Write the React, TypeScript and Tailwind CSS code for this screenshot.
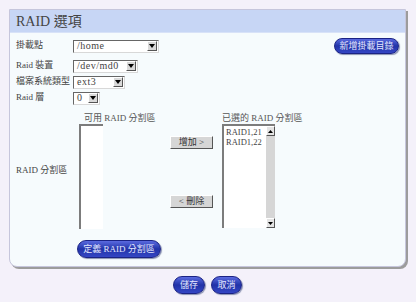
import React from "react";

const serif = "font-['Liberation_Serif','Noto_Sans_CJK_TC',serif]";

function Sel({ value, cls }: { value: string; cls: string }) {
  return (
    <div
      className={`flex items-center h-[13px] bg-white border border-t-[#666] border-l-[#666] border-b-[#d8d8d8] border-r-[#d8d8d8] ${cls}`}
    >
      <span className="flex-1 pl-[3px] text-[10px] leading-none text-[#444] tracking-[0.5px] whitespace-nowrap">{value}</span>
      <div className="w-[10px] h-[10px] mr-[1px] bg-[#d9d9d9] border border-t-white border-l-white border-b-[#555] border-r-[#555] flex items-center justify-center">
        <svg width="6" height="4" viewBox="0 0 6 4">
          <path d="M0 0 L6 0 L3 4 Z" fill="#000" />
        </svg>
      </div>
    </div>
  );
}

function BlueBtn({ children, cls }: { children: React.ReactNode; cls: string }) {
  return (
    <div
      className={`flex items-center justify-center whitespace-nowrap rounded-full border border-[#1b2384] bg-gradient-to-b from-[#5b6ae0] via-[#2233a8] to-[#3446c4] text-[#e4e8ff] text-[9px] leading-none shadow-[1px_1px_1px_#8890b0] ${cls}`}
    >
      {children}
    </div>
  );
}

function GrayBtn({ children }: { children: React.ReactNode }) {
  return (
    <div className="flex items-center justify-center whitespace-nowrap w-[43px] h-[13px] bg-[#d6d6d6] border border-t-white border-l-white border-b-[#555] border-r-[#555] text-[9px] leading-none text-[#333]">
      {children}
    </div>
  );
}

export default function App() {
  return (
    <div className={`w-[416px] h-[302px] bg-[#f4f1fa] pt-[9px] pl-[9px] ${serif}`}>
      <div className="w-[397px] h-[258px] bg-[#f6fbfd] border border-[#c6c6dc] rounded-b-[8px] shadow-[2px_2px_0_#9c9c9c] flex flex-col">
        <div className="h-[23px] bg-[#c7d6f5] flex items-center pl-[6px] text-[14px] text-[#444] border-b border-[#d8e2f8]">
          RAID 選項
        </div>
        <div className="flex flex-col pl-[6px] pr-[6px] pt-[5px] text-[9px] text-[#444] whitespace-nowrap">
          <div className="flex items-center h-[16px]">
            <span className="w-[57px]">掛載點</span>
            <Sel value="/home" cls="w-[86px]" />
            <div className="flex-1" />
            <BlueBtn cls="w-[65px] h-[16px]">新增掛載目錄</BlueBtn>
          </div>
          <div className="flex items-center h-[16px] mt-[4px]">
            <span className="w-[57px]">Raid 裝置</span>
            <Sel value="/dev/md0" cls="w-[65px]" />
          </div>
          <div className="flex items-center h-[16px]">
            <span className="w-[57px]">檔案系統類型</span>
            <Sel value="ext3" cls="w-[52px]" />
          </div>
          <div className="flex items-center h-[16px]">
            <span className="w-[57px]">Raid 層</span>
            <Sel value="0" cls="w-[27px]" />
          </div>

          <div className="flex mt-[6px]">
            <div className="w-[63px] flex items-center">
              <span>RAID 分割區</span>
            </div>
            <div className="w-[91px] flex flex-col">
              <div className="h-[12px] pl-[5px] leading-[12px] text-[#555]">可用 RAID 分割區</div>
              <div className="w-[24px] h-[105px] bg-white border-l-2 border-t-2 border-[#7c7c7c]" />
            </div>
            <div className="w-[52px] flex flex-col">
              <div className="mt-[24px]">
                <GrayBtn>增加 &gt;</GrayBtn>
              </div>
              <div className="mt-[46px]">
                <GrayBtn>&lt; 刪除</GrayBtn>
              </div>
            </div>
            <div className="flex flex-col">
              <div className="h-[12px] leading-[12px] text-[#555]">已選的 RAID 分割區</div>
              <div className="flex w-[53px] h-[104px] bg-white border-l-2 border-t-2 border-[#7c7c7c]">
                <div className="flex-1 flex flex-col pl-[2px] pt-[1px] text-[8.5px] leading-[10px] text-[#444]">
                  <span>RAID1,21</span>
                  <span>RAID1,22</span>
                </div>
                <div className="w-[9px] h-full bg-[#d6d6d6] flex flex-col justify-between">
                  <div className="w-[9px] h-[10px] bg-[#e4e4e4] border border-t-white border-l-white border-b-[#555] border-r-[#555] flex items-center justify-center">
                    <svg width="5" height="3" viewBox="0 0 5 3">
                      <path d="M0 3 L5 3 L2.5 0 Z" fill="#000" />
                    </svg>
                  </div>
                  <div className="w-[9px] h-[10px] bg-[#e4e4e4] border border-t-white border-l-white border-b-[#555] border-r-[#555] flex items-center justify-center">
                    <svg width="5" height="3" viewBox="0 0 5 3">
                      <path d="M0 0 L5 0 L2.5 3 Z" fill="#000" />
                    </svg>
                  </div>
                </div>
              </div>
            </div>
          </div>

          <div className="pl-[61px] mt-[11px]">
            <BlueBtn cls="w-[84px] h-[18px]">定義 RAID 分割區</BlueBtn>
          </div>
        </div>
      </div>
      <div className="w-[397px] flex justify-center gap-[6px] mt-[9px]">
        <BlueBtn cls="w-[32px] h-[18px]">儲存</BlueBtn>
        <BlueBtn cls="w-[31px] h-[18px]">取消</BlueBtn>
      </div>
    </div>
  );
}
